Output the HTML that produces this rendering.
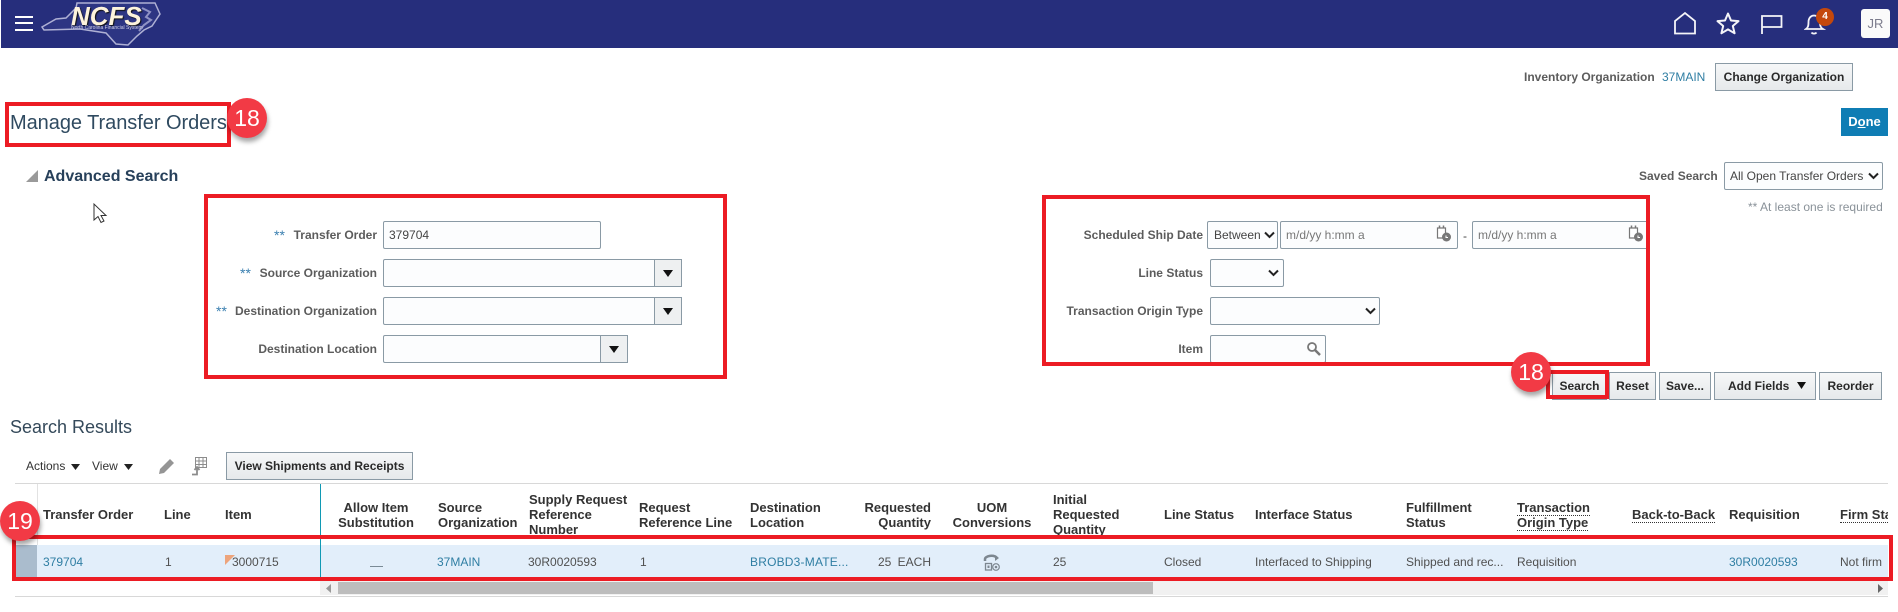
<!DOCTYPE html>
<html><head><meta charset="utf-8"><title>Manage Transfer Orders</title>
<style>
html,body{margin:0;padding:0;background:#fff}
body{width:1898px;height:612px;overflow:hidden;position:relative;font-family:"Liberation Sans",sans-serif;font-size:12px;color:#444}
div,span,svg{position:absolute}
.t{white-space:nowrap;line-height:16px}
.l{white-space:nowrap;line-height:16px;font-weight:bold;color:#5c5c5c;text-align:right}
.h{white-space:nowrap;line-height:15px;font-weight:bold;font-size:13px;color:#333}
.v{white-space:nowrap;line-height:16px;top:554px;color:#505050}
.a{color:#2f7ea3}
.in{background:#fcfdfe;border:1px solid #8a9aa5;border-radius:2px;box-sizing:border-box}
.dd{background:#eef0f1;border:1px solid #8a9aa5;box-sizing:border-box}
.b{background:linear-gradient(#f6f7f8,#e6e9eb);border:1px solid #8a9aa5;box-sizing:border-box;text-align:center;font-weight:bold;color:#2a2a2a;line-height:26px;white-space:nowrap}
.red{border:4px solid #ec1c24;box-sizing:border-box}
.badge{width:40px;height:40px;border-radius:50%;background:#f23a45;color:#fff;font-size:23px;line-height:40px;text-align:center;box-shadow:1px 4px 5px rgba(0,0,0,.35)}
.u{border-bottom:1px dotted #333}
.st{color:#3a7fb0;font-size:14px;line-height:14px}
</style></head><body>

<div style="left:1px;top:0;width:1897px;height:48px;background:#262e7c"></div>
<div style="left:15px;top:16px;width:18px;height:2px;background:#fff"></div>
<div style="left:15px;top:22px;width:18px;height:2px;background:#fff"></div>
<div style="left:15px;top:29px;width:18px;height:2px;background:#fff"></div>

<svg style="left:40px;top:0" width="122" height="48" viewBox="0 0 122 48"><path d="M2 27 L16 19 L26 18 L36 8 L37 3 L115 3 L120 14 L116 20 L112 26 L104 30 L97 36 L88 45 L76 44 L66 33 L40 29 L4 30 Z" fill="#2d3583" stroke="#aeb0d4" stroke-width="1.500"/><path d="M102 8l8 4-4 5 5 3-7 5-5 6" fill="none" stroke="#8f92c4" stroke-width="2"/></svg>
<span class="t" style="left:71px;top:3px;font:italic bold 26px/26px 'Liberation Sans',sans-serif;color:#fdf3dc;text-shadow:1px 1px 1px #111">NCFS</span>
<span class="t" style="left:71px;top:24px;font-size:5px;line-height:8px;color:#cfd0e6">North Carolina Financial System</span>

<svg style="left:1672px;top:11px" width="26" height="24" viewBox="0 0 26 24" fill="none" stroke="#f4f4f8" stroke-width="1.800"><path d="M3 22.500V10L13 2l10 8v12.500z"/></svg>
<svg style="left:1715px;top:11px" width="26" height="24" viewBox="0 0 26 24" fill="none" stroke="#f4f4f8" stroke-width="2"><path d="M13 2.500l3 7 7.500.6-5.700 4.900 1.800 7.300L13 18.400l-6.600 3.900 1.800-7.300-5.700-4.900 7.500-.6z" stroke-linejoin="round"/></svg>
<svg style="left:1760px;top:13px" width="24" height="22" viewBox="0 0 24 22" fill="none" stroke="#f4f4f8" stroke-width="1.800"><path d="M2 21V3h19.500v11H2"/></svg>
<svg style="left:1804px;top:12px" width="22" height="24" viewBox="0 0 22 24" fill="none" stroke="#f4f4f8" stroke-width="1.800"><path d="M2 17c2-1.500 2.500-3 2.500-7C4.500 6 7 3.500 10 3.500S16 6 16 10c0 4 .5 5.500 3 7z"/><path d="M7.500 20.500c1 1.500 4 1.500 5 0"/></svg>
<div style="left:1816px;top:8px;width:18px;height:18px;border-radius:50%;background:#c4480c;color:#fff;font-size:10px;font-weight:bold;text-align:center;line-height:18px">4</div>
<div style="left:1861px;top:9px;width:29px;height:29px;background:#fafafa;border-radius:3px;color:#7c7c8c;font-size:13px;text-align:center;line-height:29px">JR</div>

<span class="t" style="left:1524px;top:69px;font-weight:bold;color:#5c5c5c">Inventory Organization</span>
<span class="t a" style="left:1662px;top:69px">37MAIN</span>
<div class="b" style="left:1715px;top:63px;width:138px;height:28px">Change Organization</div>
<div style="left:1841px;top:108px;width:47px;height:28px;background:#0f7db4;color:#fff;font-weight:bold;text-align:center;line-height:28px;font-size:13px">D<span style="position:static;text-decoration:underline">o</span>ne</div>

<span class="t" style="left:10px;top:111px;font-size:20px;line-height:24px;letter-spacing:-.05px;color:#2f4a60">Manage Transfer Orders</span>
<div class="red" style="left:5px;top:102px;width:226px;height:45px"></div>
<div class="badge" style="left:227px;top:98px">18</div>

<svg style="left:26px;top:170px" width="12" height="12"><path d="M0 12L12 0V12Z" fill="#9a9a9a"/></svg>
<span class="t" style="left:44px;top:168px;font-size:16px;font-weight:bold;color:#27405a;margin-top:1px">Advanced Search</span>

<span class="t" style="left:1639px;top:168px;font-weight:bold;color:#5c5c5c">Saved Search</span>
<div class="in" style="left:1724px;top:162px;width:159px;height:28px"></div>
<span class="t" style="left:1730px;top:168px;color:#444">All Open Transfer Orders</span>
<svg style="left:1868px;top:172px" width="11" height="8"><path d="M1 1.500l4.500 4.500L10 1.500" fill="none" stroke="#222" stroke-width="2"/></svg>
<span class="t" style="left:1748px;top:199px;color:#8a9299">** At least one is required</span>

<svg style="left:92px;top:202px" width="16" height="24" viewBox="0 0 16 24"><path d="M2 2v16l4-3.500 3 6 3-1.500-3-5.500h5z" fill="#fff" stroke="#333" stroke-width="1"/></svg>

<!-- left form -->
<span class="t st" style="left:274px;top:228px">**</span>
<span class="l" style="right:1521px;top:227px">Transfer Order</span>
<div class="in" style="left:383px;top:221px;width:218px;height:28px"></div>
<span class="t" style="left:389px;top:227px;color:#444">379704</span>

<span class="t st" style="left:240px;top:266px">**</span>
<span class="l" style="right:1521px;top:265px">Source Organization</span>
<div class="in" style="left:383px;top:259px;width:299px;height:28px"></div>
<div class="dd" style="left:654px;top:259px;width:28px;height:28px"></div>
<svg style="left:663px;top:270px" width="10" height="7"><path d="M0 0h10L5 7z" fill="#111"/></svg>

<span class="t st" style="left:216px;top:304px">**</span>
<span class="l" style="right:1521px;top:303px">Destination Organization</span>
<div class="in" style="left:383px;top:297px;width:299px;height:28px"></div>
<div class="dd" style="left:654px;top:297px;width:28px;height:28px"></div>
<svg style="left:663px;top:308px" width="10" height="7"><path d="M0 0h10L5 7z" fill="#111"/></svg>

<span class="l" style="right:1521px;top:341px">Destination Location</span>
<div class="in" style="left:383px;top:335px;width:245px;height:28px"></div>
<div class="dd" style="left:600px;top:335px;width:28px;height:28px"></div>
<svg style="left:609px;top:346px" width="10" height="7"><path d="M0 0h10L5 7z" fill="#111"/></svg>
<div class="red" style="left:204px;top:194px;width:523px;height:185px"></div>

<!-- right form -->
<span class="l" style="right:695px;top:227px">Scheduled Ship Date</span>
<div class="in" style="left:1207px;top:221px;width:71px;height:28px"></div>
<span class="t" style="left:1214px;top:227px">Between</span>
<svg style="left:1264px;top:231px" width="11" height="8"><path d="M1 1.500l4.500 4.500L10 1.500" fill="none" stroke="#222" stroke-width="2"/></svg>
<div class="in" style="left:1280px;top:221px;width:178px;height:28px"></div>
<span class="t" style="left:1286px;top:227px;color:#777">m/d/yy h:mm a</span>
<svg style="left:1434px;top:222px" width="20" height="22" viewBox="0 0 20 22"><path d="M3.500 6h8v10h-8z" fill="#fff" stroke="#777" stroke-width="1.200"/><path d="M5.500 3.500v2.500M9.500 3.500v2.500" stroke="#777" stroke-width="1.500"/><circle cx="12.500" cy="15" r="4.500" fill="#777"/><path d="M12 13.500v2h2" stroke="#fff" fill="none"/></svg>
<span class="t" style="left:1463px;top:228px">-</span>
<div class="in" style="left:1472px;top:221px;width:176px;height:28px"></div>
<span class="t" style="left:1478px;top:227px;color:#777">m/d/yy h:mm a</span>
<svg style="left:1626px;top:222px" width="20" height="22" viewBox="0 0 20 22"><path d="M3.500 6h8v10h-8z" fill="#fff" stroke="#777" stroke-width="1.200"/><path d="M5.500 3.500v2.500M9.500 3.500v2.500" stroke="#777" stroke-width="1.500"/><circle cx="12.500" cy="15" r="4.500" fill="#777"/><path d="M12 13.500v2h2" stroke="#fff" fill="none"/></svg>

<span class="l" style="right:695px;top:265px">Line Status</span>
<div class="in" style="left:1210px;top:259px;width:74px;height:28px"></div>
<svg style="left:1268px;top:269px" width="11" height="8"><path d="M1 1.500l4.500 4.500L10 1.500" fill="none" stroke="#222" stroke-width="2"/></svg>

<span class="l" style="right:695px;top:303px">Transaction Origin Type</span>
<div class="in" style="left:1210px;top:297px;width:170px;height:28px"></div>
<svg style="left:1365px;top:307px" width="11" height="8"><path d="M1 1.500l4.500 4.500L10 1.500" fill="none" stroke="#222" stroke-width="2"/></svg>

<span class="l" style="right:695px;top:341px">Item</span>
<div class="in" style="left:1210px;top:335px;width:116px;height:28px"></div>
<svg style="left:1306px;top:341px" width="15" height="15" viewBox="0 0 15 15" fill="none" stroke="#777"><circle cx="6" cy="6" r="4" stroke-width="1.800"/><path d="M9 9l5 5" stroke-width="2.500"/></svg>
<div class="red" style="left:1042px;top:195px;width:608px;height:171px"></div>

<!-- buttons -->
<div class="b" style="left:1552px;top:372px;width:55px;height:28px">Search</div>
<div class="b" style="left:1609px;top:372px;width:47px;height:28px">Reset</div>
<div class="b" style="left:1659px;top:372px;width:52px;height:28px">Save...</div>
<div class="b" style="left:1714px;top:372px;width:102px;height:28px;text-align:left;padding-left:13px">Add Fields</div>
<svg style="left:1797px;top:382px" width="9" height="7"><path d="M0 0h9L4.500 7z" fill="#111"/></svg>
<div class="b" style="left:1819px;top:372px;width:63px;height:28px">Reorder</div>
<div class="red" style="left:1546px;top:370px;width:63px;height:29px"></div>
<div class="badge" style="left:1511px;top:352px">18</div>

<span class="t" style="left:10px;top:416px;font-size:18px;line-height:22px;color:#34495a">Search Results</span>

<!-- toolbar -->
<span class="t" style="left:26px;top:458px;color:#333">Actions</span>
<svg style="left:71px;top:464px" width="9" height="6"><path d="M0 0h9L4.500 6z" fill="#222"/></svg>
<span class="t" style="left:92px;top:458px;color:#333">View</span>
<svg style="left:124px;top:464px" width="9" height="6"><path d="M0 0h9L4.500 6z" fill="#222"/></svg>
<svg style="left:158px;top:457px" width="18" height="18" viewBox="0 0 18 18"><path d="M1 17l1-5L12 2l4 4L6 16z" fill="#959595"/></svg>
<svg style="left:190px;top:456px" width="18" height="20" viewBox="0 0 18 20" fill="none" stroke="#8c8c8c"><path d="M5.500 1.500h11v10h-11zM5.500 5h11M5.500 8.500h11M9 1.500v10M13 1.500v10"/><path d="M2 18.500h5V12M4.500 14l2.500-3 2.500 3" stroke-width="1.800"/></svg>
<div class="b" style="left:226px;top:452px;width:187px;height:28px">View Shipments and Receipts</div>

<!-- table -->
<div style="left:15px;top:483px;width:1873px;height:1px;background:#d8d8d8"></div>
<div style="left:37px;top:484px;width:1px;height:61px;background:#e2e2e2"></div>
<div style="left:15px;top:545px;width:1873px;height:33px;background:#e2eefa"></div>
<div style="left:15px;top:545px;width:22px;height:33px;background:#aabccd"></div>
<div style="left:320px;top:484px;width:1px;height:94px;background:#1099b4"></div>

<span class="h" style="left:43px;top:507px">Transfer Order</span>
<span class="h" style="left:164px;top:507px">Line</span>
<span class="h" style="left:225px;top:507px">Item</span>
<span class="h" style="left:326px;width:100px;top:500px;text-align:center">Allow Item<br>Substitution</span>
<span class="h" style="left:438px;top:500px">Source<br>Organization</span>
<span class="h" style="left:529px;top:492px">Supply Request<br>Reference<br>Number</span>
<span class="h" style="left:639px;top:500px">Request<br>Reference Line</span>
<span class="h" style="left:750px;top:500px">Destination<br>Location</span>
<span class="h" style="right:967px;top:500px;text-align:right">Requested<br>Quantity</span>
<span class="h" style="left:942px;width:100px;top:500px;text-align:center">UOM<br>Conversions</span>
<span class="h" style="left:1053px;top:492px">Initial<br>Requested<br>Quantity</span>
<span class="h" style="left:1164px;top:507px">Line Status</span>
<span class="h" style="left:1255px;top:507px">Interface Status</span>
<span class="h" style="left:1406px;top:500px">Fulfillment<br>Status</span>
<span class="h" style="left:1517px;top:500px"><span class="u" style="position:static">Transaction</span><br><span class="u" style="position:static">Origin Type</span></span>
<span class="h u" style="left:1632px;top:507px">Back-to-Back</span>
<span class="h" style="left:1729px;top:507px">Requisition</span>
<div style="left:1840px;top:500px;width:48px;height:30px;overflow:hidden"><span class="h u" style="left:0;top:7px">Firm Status</span></div>

<span class="v a" style="left:43px">379704</span>
<span class="v" style="left:165px">1</span>
<svg style="left:225px;top:555px" width="10" height="10"><path d="M0 0h10L0 10z" fill="#eda47c"/></svg>
<span class="v" style="left:232px">3000715</span>
<div style="left:370px;top:566px;width:13px;height:1px;background:#7a8a96"></div>
<span class="v a" style="left:437px">37MAIN</span>
<span class="v" style="left:528px">30R0020593</span>
<span class="v" style="left:640px">1</span>
<span class="v a" style="left:750px;letter-spacing:.2px">BROBD3-MATE...</span>
<span class="v" style="right:967px;word-spacing:3px">25 EACH</span>
<svg style="left:982px;top:553px" width="20" height="20" viewBox="0 0 20 20"><path d="M3 8V6c0-3 9-5 12-1" fill="none" stroke="#7d8790" stroke-width="2.500"/><path d="M13 2l4 3-4 3z" fill="#7d8790"/><rect x="3.500" y="10.500" width="6" height="6.500" fill="none" stroke="#7d8790" stroke-width="1.300"/><rect x="5.500" y="12.500" width="2" height="2.500" fill="#7d8790"/><circle cx="14" cy="14" r="3.300" fill="none" stroke="#7d8790" stroke-width="1.200"/><circle cx="14" cy="14" r="1.300" fill="#7d8790"/></svg>
<span class="v" style="left:1053px">25</span>
<span class="v" style="left:1164px">Closed</span>
<span class="v" style="left:1255px">Interfaced to Shipping</span>
<span class="v" style="left:1406px">Shipped and rec...</span>
<span class="v" style="left:1517px">Requisition</span>
<span class="v a" style="left:1729px">30R0020593</span>
<span class="v" style="left:1840px">Not firm</span>

<!-- scrollbar -->
<div style="left:320px;top:581px;width:1568px;height:14px;background:#f1f1f1"></div>
<div style="left:338px;top:582px;width:815px;height:12px;background:#bdbdbd"></div>
<svg style="left:326px;top:584px" width="6" height="9"><path d="M5 0v9L0 4.500z" fill="#999"/></svg>
<svg style="left:1878px;top:584px" width="6" height="9"><path d="M0 0v9l5-4.500z" fill="#666"/></svg>
<div style="left:15px;top:596px;width:1873px;height:1px;background:#d8d8d8"></div>

<div class="red" style="left:12px;top:535px;width:1881px;height:46px"></div>
<div class="badge" style="left:0;top:501px">19</div>
</body></html>
